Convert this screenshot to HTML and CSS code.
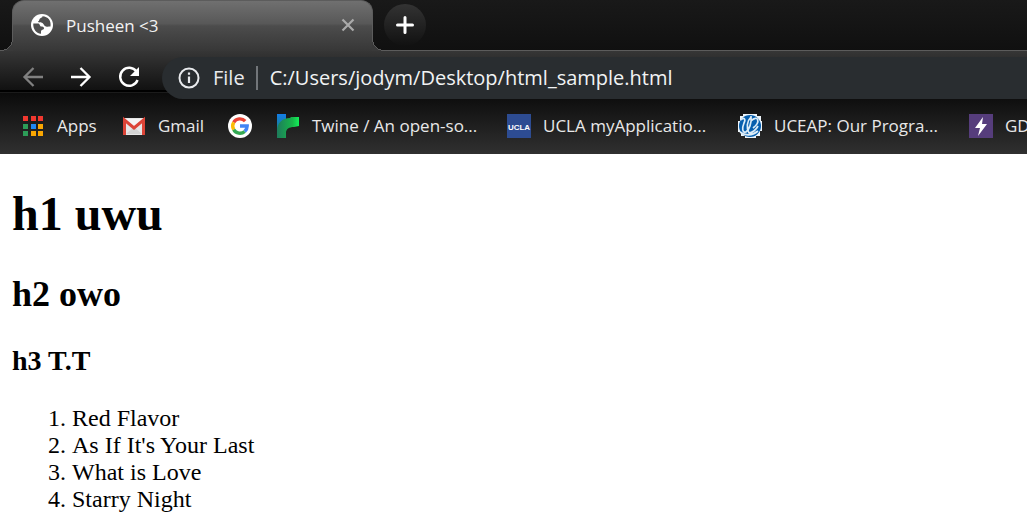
FILE: index.html
```html
<!DOCTYPE html>
<html lang="en">
<head>
<meta charset="utf-8">
<title>Pusheen &lt;3</title>
<link rel="stylesheet" href="styles.css">
</head>
<body>
<header class="browser">
  <div class="tab-strip">
    <div class="tab">
      <svg class="tab-icon" viewBox="0 0 22 22" aria-hidden="true">
        <circle cx="11" cy="11" r="11" fill="#fff"/>
        <path d="M2.300 9.500H7C9 9.500 8.500 12 10 12.500C12 12.500 13 13 13 14.500C13 16 10 15.500 10 17.500V19.700C5 19.500 1.800 14.500 2.300 9.500ZM11.500 2.300C11.500 4 10 3.500 9 4.500C8 5.500 8.500 7 7 7.500C7.500 9 10 8 11.500 9C13 10 13 12 15 12.500C16.500 13 18 12.500 19.500 12.500C20.500 7 17 2.500 11.500 2.300Z" fill="#505050"/>
      </svg>
      <span class="tab-title">Pusheen &lt;3</span>
      <button class="tab-close" aria-label="Close tab"><svg viewBox="0 0 14 14"><path d="M1.500 1.500l11 11M12.500 1.500l-11 11" stroke="#aaa" stroke-width="2.200"/></svg></button>
    </div>
    <button class="new-tab" aria-label="New tab"><svg viewBox="0 0 18 18"><path d="M9 1.500v15M1.500 9h15" stroke="#fff" stroke-width="3" stroke-linecap="round"/></svg></button>
  </div>
  <div class="panel">
    <div class="toolbar">
      <nav class="nav">
        <button class="nav-button" aria-label="Back" disabled><svg viewBox="0 0 24 24"><path d="M22 12H4M12.500 3 3.500 12l9 9" fill="none" stroke="#808080" stroke-width="2.300"/></svg></button>
        <button class="nav-button" aria-label="Forward"><svg viewBox="0 0 24 24"><path d="M2 12h18M11.500 3l9 9-9 9" fill="none" stroke="#fff" stroke-width="2.300"/></svg></button>
        <button class="nav-button" aria-label="Reload"><svg viewBox="0 0 24 24"><path d="M19.500 6.500A9 9 0 1 0 20.600 15" fill="none" stroke="#fff" stroke-width="2.400"/><path d="M22 2v9h-9z" fill="#fff"/></svg></button>
      </nav>
      <div class="omnibox">
        <svg class="info" viewBox="0 0 22 22" aria-hidden="true"><circle cx="11" cy="11" r="9.500" fill="none" stroke="#e8eaed" stroke-width="2"/><path d="M11 9.500v6.500M11 5.500v2.300" stroke="#e8eaed" stroke-width="2.200"/></svg>
        <label class="scheme" for="address">File</label>
        <input class="address" id="address" type="text" value="C:/Users/jodym/Desktop/html_sample.html">
      </div>
    </div>
    <nav class="bookmarks">
      <a class="bookmark apps" href="#">
        <svg class="favicon" viewBox="0 0 24 24" aria-hidden="true">
          <path d="M2 2h5v5H2zM10 2h5v5h-5zM17 2h5v5h-5z" fill="#f1382f"/>
          <path d="M2 10h5v5H2zM2 17h5v5H2z" fill="#2d9d58"/>
          <path d="M10 10h5v5h-5z" fill="#1e88f5"/>
          <path d="M17 10h5v5h-5zM10 17h5v5h-5zM17 17h5v5h-5z" fill="#f9a602"/>
        </svg>
        <span>Apps</span>
      </a>
      <a class="bookmark gmail" href="#">
        <svg class="favicon" viewBox="0 0 24 24" aria-hidden="true">
          <rect x="1" y="4" width="22" height="17" rx="1.500" fill="#e6e6e6"/>
          <path d="M4 20l8-7 8 7z" fill="#d3d3d3"/>
          <path d="M2 5h20L12 13z" fill="#f4f4f4"/>
          <path d="M2.500 21V6l9.500 8 9.500-8v15" fill="none" stroke="#dc4437" stroke-width="3"/>
        </svg>
        <span>Gmail</span>
      </a>
      <a class="bookmark google" href="#" aria-label="Google">
        <svg class="favicon" viewBox="0 0 24 24" aria-hidden="true">
          <circle cx="12" cy="12" r="12" fill="#fff"/>
          <g fill="none" stroke-width="3.400">
            <path d="M17.200 7.200A7.200 7.200 0 0 0 5.700 8.400" stroke="#ea4335"/>
            <path d="M5.700 8.400a7.200 7.200 0 0 0 0 7.200" stroke="#fbbc05"/>
            <path d="M5.700 15.600a7.200 7.200 0 0 0 11 1.800" stroke="#34a853"/>
            <path d="M16.700 17.400A7.200 7.200 0 0 0 19.200 12H12" stroke="#4285f4"/>
          </g>
        </svg>
      </a>
      <a class="bookmark twine" href="#">
        <svg class="favicon" viewBox="0 0 24 24" aria-hidden="true">
          <defs>
            <linearGradient id="pipe-blue" x1="0" y1="0" x2="0" y2="1"><stop offset="0" stop-color="#147de8"/><stop offset="1" stop-color="#177f79"/></linearGradient>
            <linearGradient id="pipe-green"><stop offset="0" stop-color="#1e7b5b"/><stop offset=".7" stop-color="#17b64a"/><stop offset="1" stop-color="#13ef59"/></linearGradient>
          </defs>
          <path d="M1 0h9v18H1z" fill="url(#pipe-blue)"/>
          <path d="M1 24V18C1 9 6 4 14 4l1-1h8v9l-5 1c-5 0-8 2-8 6v5z" fill="url(#pipe-green)"/>
        </svg>
        <span>Twine / An open-so...</span>
      </a>
      <a class="bookmark ucla" href="#">
        <svg class="favicon" viewBox="0 0 24 24" aria-hidden="true"><rect width="24" height="24" fill="#2d4c92"/><text class="ucla-mark" x="12" y="16" text-anchor="middle">UCLA</text></svg>
        <span>UCLA myApplicatio...</span>
      </a>
      <a class="bookmark uceap" href="#">
        <svg class="favicon" viewBox="0 0 24 24" aria-hidden="true">
          <path d="M5 0h14v2h4v5h1v10h-2v5h-4v2H7v-2H3v-4H0V7h2V2h3z" fill="#eef5fa"/>
          <circle cx="12" cy="12" r="11" fill="#075fae"/>
          <path d="M3 6C6 3 8 5 6 9C4 14 4 19 8 18C11 16 14 9 13 2M13 3C9 7 8 14 11 19C14 19 18 16 20 12M13 7C20 0 23 8 15 14M2 18c5 4 12 4 18-1" fill="none" stroke="#dcecf7" stroke-width="1.700"/>
        </svg>
        <span>UCEAP: Our Progra...</span>
      </a>
      <a class="bookmark" href="#">
        <svg class="favicon" viewBox="0 0 24 24" aria-hidden="true"><rect width="24" height="24" fill="#563d7c"/><path d="M14 3 6 14h5l-2 8 9-12h-5z" fill="#fff"/></svg>
        <span>GD</span>
      </a>
    </nav>
  </div>
</header>
<main class="page">
  <h1 class="heading-one">h1 uwu</h1>
  <h2 class="heading-two">h2 owo</h2>
  <h3 class="heading-three">h3 T.T</h3>
  <ol class="songs">
    <li>Red Flavor</li>
    <li>As If It's Your Last</li>
    <li>What is Love</li>
    <li>Starry Night</li>
  </ol>
</main>
</body>
</html>
```

FILE: styles.css
```css
* { box-sizing: border-box; }
body { margin: 0; background: #fff; color: #000; }
svg { display: block; flex: none; }
button { padding: 0; border: 0; background: none; }

.browser { font-family: "Open Sans", "Noto Sans", sans-serif; color: #e8eaed; overflow: hidden; }

.tab-strip {
  display: flex;
  height: 51px;
  padding-left: 12px;
  background: linear-gradient(#191919, #101010);
  border-bottom: 1px solid #5c5c5c;
}
.tab {
  position: relative;
  display: flex;
  align-items: center;
  flex: 0 1 361px;
  height: 51px;
  padding: 0 17px 2px 18px;
  border: 1px solid #5c5c5c;
  border-bottom: 0;
  border-radius: 12px 12px 0 0;
  background: linear-gradient(#707070, #585858 45%, #4c4c4c 50%, #373737);
}
.tab::before, .tab::after {
  content: "";
  position: absolute;
  bottom: 0;
  width: 12px;
  height: 12px;
}
.tab::before { left: -12px; background: radial-gradient(circle at 0 0, transparent 11px, #5c5c5c 11px 12px, #393939 12px); }
.tab::after { right: -12px; background: radial-gradient(circle at 100% 0, transparent 11px, #5c5c5c 11px 12px, #393939 12px); }
.tab-icon { width: 22px; height: 22px; }
.tab-title { flex: 1; margin-left: 13px; font-size: 17px; color: #f2f2f2; }
.tab-close svg { width: 14px; height: 14px; }
.new-tab {
  display: flex;
  align-items: center;
  justify-content: center;
  width: 42px;
  height: 42px;
  margin: 4px 0 0 11px;
  border-radius: 50%;
  background: linear-gradient(#333, #111);
}
.new-tab svg { width: 18px; height: 18px; }

.panel {
  background: linear-gradient(#363636 0, #111 39px, #000 39px 41px, #1b1b1b 41px 42px, #0b0b0b 42px, #303030 100%);
}
.toolbar { display: flex; align-items: flex-start; padding: 6px 0 0 21px; }
.nav { display: flex; gap: 24px; padding-top: 8px; }
.nav-button svg { width: 24px; height: 24px; }
.omnibox {
  display: flex;
  align-items: center;
  flex: 1;
  height: 42px;
  margin-left: 21px;
  padding-left: 16px;
  border-radius: 21px 0 0 21px;
  background: #292d30;
}
.info { width: 22px; height: 22px; }
.scheme {
  margin-left: 13px;
  padding-right: 11px;
  border-right: 2px solid #72767a;
  font-size: 20px;
  line-height: 24px;
}
.address {
  flex: 1;
  min-width: 0;
  margin-left: 12px;
  padding: 0;
  border: 0;
  outline: 0;
  background: none;
  color: #f1f3f4;
  font: 20px/28px "Open Sans", "Noto Sans", sans-serif;
}

.bookmarks { display: flex; align-items: center; height: 55px; padding: 0 0 2px 21px; }
.bookmark {
  display: flex;
  align-items: center;
  flex: none;
  gap: 12px;
  color: #e8e8e8;
  font-size: 17px;
  line-height: 24px;
  white-space: nowrap;
  text-decoration: none;
}
.favicon { width: 24px; height: 24px; }
.apps { width: 101px; }
.gmail { width: 106px; }
.google { width: 48px; }
.twine { width: 231px; }
.ucla { width: 231px; }
.uceap { width: 231px; }
.ucla-mark { font: bold 8px "Liberation Sans", sans-serif; fill: #fff; }

.page { padding: 33px 12px 5px; font-family: "Liberation Serif", "Times New Roman", serif; }
.heading-one { margin: 0 0 33px; font-size: 48px; line-height: 54px; }
.heading-two { margin: 0 0 31px; font-size: 36px; line-height: 40px; }
.heading-three { margin: 0 0 28px; font-size: 28px; line-height: 32px; }
.songs { margin: 0; padding-left: 60px; font-size: 24px; line-height: 27px; }
```
